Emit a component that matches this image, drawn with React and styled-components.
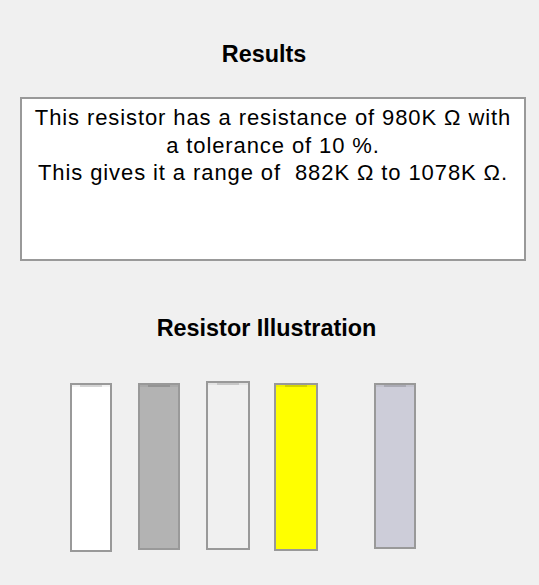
import React from "react";
import styled, { createGlobalStyle } from "styled-components";

const GlobalStyle = createGlobalStyle`
  body {
    margin: 0;
    background: #f0f0f0;
    font-family: "Liberation Sans", Arial, sans-serif;
    font-size: 20px;
    color: #000;
  }
`;

const Page = styled.div`
  width: 539px;
  padding-top: 41px;
`;

const Heading = styled.h3`
  font-size: 1.17em;
  font-weight: bold;
  text-align: center;
  margin: ${(p) => p.top || 0}px 0 0;
  padding-right: ${(p) => p.shift || 0}px;
  line-height: 27px;
`;

const ResultBox = styled.div`
  box-sizing: border-box;
  margin: 29px 0 0 20px;
  width: 506px;
  height: 164px;
  padding: 5px 4px 0;
  border: 2px solid #999;
  background: #fff;
  text-align: center;
  font-size: 22px;
  letter-spacing: 0.9px;
  line-height: 27.5px;
`;

const Bands = styled.div`
  display: flex;
  align-items: flex-start;
  padding-left: 70px;
  margin-top: 41px;
`;

const Band = styled.div`
  position: relative;
  box-sizing: border-box;
  width: ${(p) => p.w || 42}px;
  height: ${(p) => p.h || 168}px;
  margin-top: ${(p) => p.dy || 0}px;
  margin-left: ${(p) => p.gap || 0}px;
  border: 2px solid #999;
  background: ${(p) => p.color};

  &::before {
    content: "";
    position: absolute;
    top: 0;
    left: 0;
    right: 0;
    height: 2px;
    background: rgba(0, 0, 0, 0.05);
  }

  &::after {
    content: "";
    position: absolute;
    top: 0;
    left: 50%;
    width: 22px;
    margin-left: -11px;
    height: 2px;
    background: rgba(0, 0, 0, 0.12);
  }
`;

const bands = [
  { color: "#ffffff", w: 42, h: 169 },
  { color: "#b3b3b3", w: 42, h: 167, gap: 26 },
  { color: "#f0f0f0", w: 44, h: 169, gap: 26, dy: -2 },
  { color: "#ffff00", w: 44, h: 168, gap: 24 },
  { color: "#cdcdd9", w: 42, h: 166, gap: 56 },
];

const App = () => {
  return (
    <Page>
      <GlobalStyle />
      <Heading shift={11}>Results</Heading>
      <ResultBox>
        This resistor has a resistance of 980K Ω with a tolerance of 10 %.
        <br />
        This gives it a range of &nbsp;882K Ω to 1078K Ω.
      </ResultBox>
      <Heading top={54} shift={6}>
        Resistor Illustration
      </Heading>
      <Bands>
        {bands.map((b, i) => (
          <Band key={i} {...b} />
        ))}
      </Bands>
    </Page>
  );
};

export default App;
